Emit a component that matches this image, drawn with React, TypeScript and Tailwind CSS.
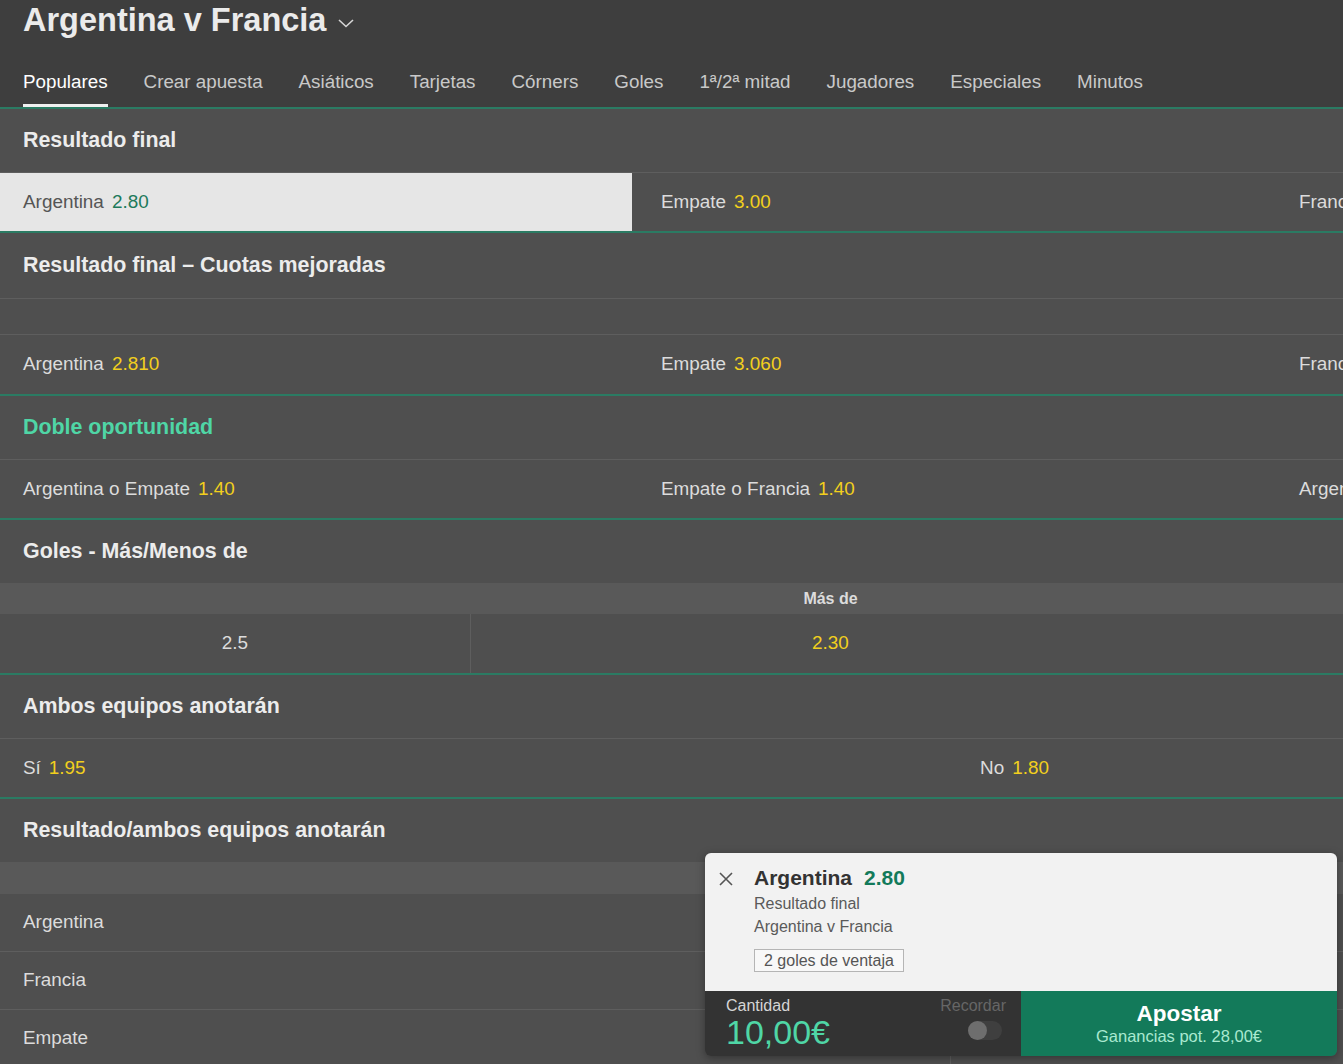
const font = { fontFamily: '"Liberation Sans", Arial, sans-serif' };

const tabs = [
  "Populares",
  "Crear apuesta",
  "Asiáticos",
  "Tarjetas",
  "Córners",
  "Goles",
  "1ª/2ª mitad",
  "Jugadores",
  "Especiales",
  "Minutos",
];

function SectionTitle({
  title,
  green,
  h = "h-[63px]",
}: {
  title: string;
  green?: boolean;
  h?: string;
}) {
  return (
    <div
      className={`flex items-center px-[23px] text-[21.4px] font-bold ${h} ${
        green ? "text-[#4fd6a6]" : "text-[#ececec]"
      }`}
    >
      {title}
    </div>
  );
}

function Odd({ label, price }: { label: string; price?: string }) {
  return (
    <span className="whitespace-nowrap">
      <span className="text-[#dcdcdc]">{label}</span>
      {price && <span className="ml-[8px] text-[#f2cf1d]">{price}</span>}
    </span>
  );
}

const Sep = () => <div className="h-px bg-[#5e5e5e]" />;
const Green = () => <div className="h-[2px] bg-[#2b7b63]" />;

export default function App() {
  return (
    <div
      className="relative h-[1064px] w-[1343px] overflow-hidden bg-[#4f4f4f] text-[18.9px]"
      style={font}
    >
      {/* header */}
      <div className="bg-[#3e3e3e]">
        <div className="flex h-[40px] items-center px-[23px]">
          <h1 className="text-[32.5px] font-bold leading-none text-[#ebebeb]">
            Argentina v Francia
          </h1>
          <svg
            width="18"
            height="12"
            viewBox="0 0 18 12"
            className="ml-[11px] mt-[6px]"
          >
            <path
              d="M2 3 L9 9.5 L16 3"
              fill="none"
              stroke="#d6d6d6"
              strokeWidth="1.6"
            />
          </svg>
        </div>
        <div className="flex h-[67px] items-end gap-[36px] px-[23px]">
          {tabs.map((t, i) => (
            <div
              key={t}
              className={`flex h-[67px] flex-col justify-end whitespace-nowrap ${
                i === 0 ? "text-white" : "text-[#c9c9c9]"
              }`}
            >
              <span className="mb-[12px] text-[18.8px] leading-none">{t}</span>
              <div
                className={`h-[3px] ${i === 0 ? "bg-[#f0f0f0]" : "bg-transparent"}`}
              />
            </div>
          ))}
        </div>
      </div>
      <Green />

      {/* Resultado final */}
      <SectionTitle title="Resultado final" />
      <Sep />
      <div className="grid h-[58px] grid-cols-[638px_638px_638px] items-stretch">
        <div className="flex w-[632px] items-center bg-[#e6e6e6] pl-[23px]">
          <span className="text-[#555555]">Argentina</span>
          <span className="ml-[8px] text-[#1d7a5b]">2.80</span>
        </div>
        <div className="flex items-center pl-[23px]">
          <Odd label="Empate" price="3.00" />
        </div>
        <div className="flex items-center pl-[23px]">
          <Odd label="Francia" price="2.75" />
        </div>
      </div>
      <Green />

      {/* Cuotas mejoradas */}
      <SectionTitle title="Resultado final – Cuotas mejoradas" h="h-[65px]" />
      <Sep />
      <div className="h-[35px]" />
      <Sep />
      <div className="grid h-[59px] grid-cols-[638px_638px_638px] items-center">
        <div className="pl-[23px]">
          <Odd label="Argentina" price="2.810" />
        </div>
        <div className="pl-[23px]">
          <Odd label="Empate" price="3.060" />
        </div>
        <div className="pl-[23px]">
          <Odd label="Francia" price="2.780" />
        </div>
      </div>
      <Green />

      {/* Doble oportunidad */}
      <SectionTitle title="Doble oportunidad" green />
      <Sep />
      <div className="grid h-[58px] grid-cols-[638px_638px_638px] items-center">
        <div className="pl-[23px]">
          <Odd label="Argentina o Empate" price="1.40" />
        </div>
        <div className="pl-[23px]">
          <Odd label="Empate o Francia" price="1.40" />
        </div>
        <div className="pl-[23px]">
          <Odd label="Argentina o Francia" price="1.36" />
        </div>
      </div>
      <Green />

      {/* Goles */}
      <SectionTitle title="Goles - Más/Menos de" />
      <div className="grid h-[31px] grid-cols-[471px_719px_719px] items-center bg-[#595959] text-[16px] font-bold text-[#dcdcdc]">
        <div />
        <div className="text-center">Más de</div>
        <div className="text-center">Menos de</div>
      </div>
      <div className="grid h-[59px] grid-cols-[471px_719px_719px] items-stretch">
        <div className="flex items-center justify-center border-r border-[#5e5e5e] text-[#dcdcdc]">
          2.5
        </div>
        <div className="flex items-center justify-center text-[#f2cf1d]">
          2.30
        </div>
        <div className="flex items-center justify-center text-[#f2cf1d]">
          1.62
        </div>
      </div>
      <Green />

      {/* Ambos equipos */}
      <SectionTitle title="Ambos equipos anotarán" />
      <Sep />
      <div className="grid h-[58px] grid-cols-[957px_957px] items-center">
        <div className="pl-[23px]">
          <Odd label="Sí" price="1.95" />
        </div>
        <div className="pl-[23px]">
          <Odd label="No" price="1.80" />
        </div>
      </div>
      <Green />

      {/* Resultado/ambos */}
      <SectionTitle title="Resultado/ambos equipos anotarán" />
      <div className="h-[32px] bg-[#595959]" />
      {["Argentina", "Francia", "Empate"].map((r, i) => (
        <div key={r}>
          {i > 0 && <Sep />}
          <div className="grid h-[57px] grid-cols-[950px_1fr] items-stretch">
            <div className="flex items-center pl-[23px] text-[#dcdcdc]">{r}</div>
            <div className="border-l border-[#5e5e5e]" />
          </div>
        </div>
      ))}

      {/* bet slip */}
      <div className="absolute left-[705px] top-[853px] w-[632px] overflow-hidden rounded-[6px] shadow-[0_2px_8px_rgba(0,0,0,0.35)]">
        <div className="flex h-[138px] bg-[#f2f2f2]">
          <div className="w-[49px] pl-[13px] pt-[18px]">
            <svg width="16" height="16" viewBox="0 0 16 16">
              <path
                d="M2 2 L14 14 M14 2 L2 14"
                stroke="#555"
                strokeWidth="1.6"
              />
            </svg>
          </div>
          <div className="pt-[12px]">
            <div className="flex items-baseline text-[21px] font-bold leading-[26px]">
              <span className="text-[#333333]">Argentina</span>
              <span className="ml-[12px] text-[#137a5a]">2.80</span>
            </div>
            <div className="mt-[1px] text-[16px] leading-[23px] text-[#5a5a5a]">
              Resultado final
            </div>
            <div className="text-[16px] leading-[23px] text-[#5a5a5a]">
              Argentina v Francia
            </div>
            <div className="mt-[11px] inline-block border border-[#b5b5b5] bg-[#f8f8f8] px-[9px] text-[16px] leading-[21px] text-[#555555]">
              2 goles de ventaja
            </div>
          </div>
        </div>
        <div className="flex h-[65px]">
          <div className="flex w-[316px] justify-between bg-[#333333] pl-[21px] pr-[15px]">
            <div className="pt-[6px]">
              <div className="text-[16px] leading-[17px] text-[#d6d6d6]">
                Cantidad
              </div>
              <div className="text-[34px] leading-[36px] text-[#4fd6a6]">
                10,00€
              </div>
            </div>
            <div className="flex flex-col items-end pt-[6px]">
              <div className="text-[16px] leading-[17px] text-[#666666]">
                Recordar
              </div>
              <div className="mr-[4px] mt-[7px] flex h-[19px] w-[34px] items-center rounded-full bg-[#3f3f3f]">
                <div className="h-[19px] w-[19px] rounded-full bg-[#6e6e6e]" />
              </div>
            </div>
          </div>
          <div className="flex flex-1 flex-col items-center justify-center bg-[#137a5a]">
            <div className="text-[22.5px] font-bold leading-[26px] text-white">
              Apostar
            </div>
            <div className="text-[16.5px] leading-[19px] text-[#a9e9d0]">
              Ganancias pot. 28,00€
            </div>
          </div>
        </div>
      </div>
    </div>
  );
}
